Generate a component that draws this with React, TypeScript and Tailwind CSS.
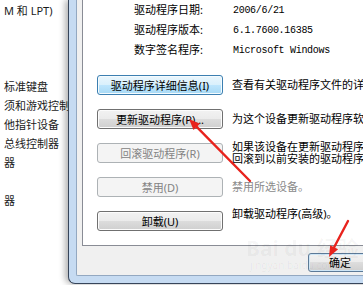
import React from "react";

// Rows of the device list that peeks out from behind the dialog (19px pitch)
const LEFT_ROWS = ["M 和 LPT)", "", "", "", "标准键盘", "须和游戏控制器", "他指针设备", "总线控制器", "器", "", "器"];

const INFO = [
  ["驱动程序日期:", "2006/6/21"],
  ["驱动程序版本:", "6.1.7600.16385"],
  ["数字签名程序:", "Microsoft Windows"],
];

type Action = {
  label: string;
  desc: string[];
  state?: "hover" | "disabled";
  descGray?: boolean;
  top?: boolean;
};

const ACTIONS: Action[] = [
  { label: "驱动程序详细信息(I)", desc: ["查看有关驱动程序文件的详细信息。"], state: "hover" },
  { label: "更新驱动程序(P)...", desc: ["为这个设备更新驱动程序软件。"] },
  { label: "回滚驱动程序(R)", desc: ["如果该设备在更新驱动程序时失败，", "回滚到以前安装的驱动程序。"], state: "disabled" },
  { label: "禁用(D)", desc: ["禁用所选设备。"], state: "disabled", descGray: true },
  { label: "卸载(U)", desc: ["卸载驱动程序(高级)。"], top: true },
];

const FONT = "font-['Noto_Sans','Noto_Sans_CJK_SC',sans-serif]";

function btnClass(state?: "hover" | "disabled") {
  if (state === "hover")
    return "border-[#3c7fb1] bg-[linear-gradient(#eaf6fd,#d9f0fc_50%,#bee6fd_50%,#a7d9f5)] text-black shadow-[inset_0_0_0_1px_#f4fbfe]";
  if (state === "disabled")
    return "border-[#adb2b5] bg-[#f4f4f4] text-[#838383]";
  return "border-[#707070] bg-[linear-gradient(#f2f2f2,#ebebeb_50%,#dddddd_50%,#cfcfcf)] text-black shadow-[inset_0_0_0_1px_#fcfcfc]";
}

function Arrow({ x1, y1, x2, y2 }: { x1: number; y1: number; x2: number; y2: number }) {
  const a = Math.atan2(y2 - y1, x2 - x1);
  const len = 11;
  const half = 4.5;
  const bx = x2 - len * Math.cos(a);
  const by = y2 - len * Math.sin(a);
  const px = -Math.sin(a) * half;
  const py = Math.cos(a) * half;
  return (
    <g>
      <line x1={x1} y1={y1} x2={bx} y2={by} stroke="#e8231d" strokeWidth={2.4} strokeLinecap="round" />
      <polygon points={`${x2},${y2} ${bx + px},${by + py} ${bx - px},${by - py}`} fill="#e8231d" />
    </g>
  );
}

export default function App() {
  return (
    <div className={`relative flex w-[363px] h-[285px] overflow-hidden bg-white ${FONT}`}>
      {/* Device list behind the dialog */}
      <div className="w-[68px] shrink-0 overflow-hidden pl-[4px] pt-[1px] text-[11px] text-[#1b1b1b]">
        {LEFT_ROWS.map((t, i) => (
          <div key={i} className="h-[19px] leading-[19px] whitespace-nowrap">
            {t}
          </div>
        ))}
      </div>

      {/* Dialog window frame */}
      <div className="flex-1 h-[284px] border-l border-b border-[#37455a] rounded-bl-[7px] bg-[#c6dbf2] pl-[7px] pb-[7px] shadow-[-3px_0_6px_rgba(0,0,0,0.3)]">
        <div className="h-full flex flex-col border-l border-b border-[#93a8c1] rounded-bl-[2px] bg-[#f0f0f0] pl-[5px]">
          {/* Tab panel */}
          <div className="flex-1 mr-[2px] bg-white border-l border-r border-b border-[#898c95]">
            <div className="text-[11px] text-black">
              {INFO.map(([k, v]) => (
                <div key={k} className="flex h-[20px] items-center pl-[51px]">
                  <span className="w-[99px] shrink-0 whitespace-nowrap">{k}</span>
                  <span className="font-['Liberation_Mono',monospace] text-[10px] tracking-[-0.3px] whitespace-nowrap">{v}</span>
                </div>
              ))}
            </div>

            <div className="mt-[15px] flex flex-col gap-[14px] pl-[14px]">
              {ACTIONS.map((a) => (
                <div key={a.label} className="flex h-[20px] items-center gap-[9px]">
                  <div
                    className={`w-[126px] h-[20px] shrink-0 flex items-center justify-center rounded-[3px] border text-[11px] leading-none whitespace-nowrap ${btnClass(a.state)}`}
                  >
                    {a.label}
                  </div>
                  <div
                    className={`text-[11px] whitespace-nowrap ${a.descGray ? "text-[#8a8a8a]" : "text-black"} ${a.top ? "self-start -mt-[4px] leading-[14px]" : "leading-[12px]"}`}
                  >
                    {a.desc.map((d) => (
                      <div key={d}>{d}</div>
                    ))}
                  </div>
                </div>
              ))}
            </div>
          </div>

          {/* Dialog footer */}
          <div className="h-[29px] shrink-0 pl-[226px] pt-[7px]">
            <div className="w-[64px] h-[19px] flex items-center justify-center rounded-[3px] border border-[#5c7a98] bg-[linear-gradient(#f2f2f2,#ebebeb_50%,#dddddd_50%,#cfcfcf)] shadow-[inset_0_0_0_1px_#cfe6f6] text-[11px] text-black leading-none">
              确定
            </div>
          </div>
        </div>
      </div>

      {/* Baidu jingyan watermark */}
      <div className="absolute left-[246px] top-[236px] pointer-events-none text-black/[0.045]">
        <div className="text-[21px] font-bold leading-[24px] whitespace-nowrap">Bai du 经验</div>
        <div className="text-[10px] leading-[11px] whitespace-nowrap pl-[4px]">jingyan.baidu.com</div>
      </div>

      {/* Red annotation arrows */}
      <svg className="absolute inset-0 pointer-events-none" width={363} height={285}>
        <Arrow x1={250} y1={181} x2={189} y2={119} />
        <Arrow x1={348} y1={221} x2={329} y2={257} />
      </svg>
    </div>
  );
}
